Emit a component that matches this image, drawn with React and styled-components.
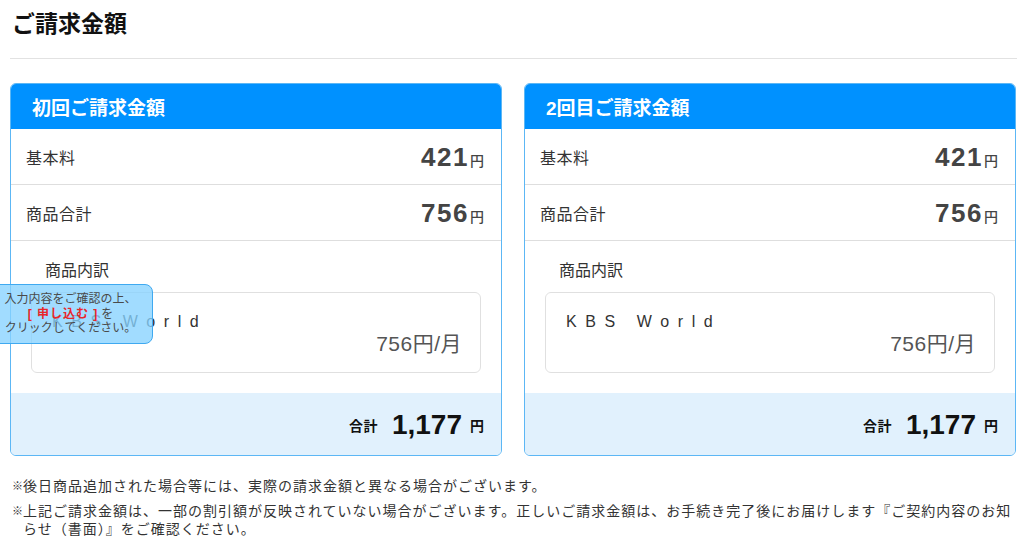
import React from "react";
import styled, { createGlobalStyle } from "styled-components";

const Global = createGlobalStyle`
  html, body { margin: 0; padding: 0; background: #fff; }
  body { font-family: "Liberation Sans", "Noto Sans CJK JP", sans-serif; color: #333; }
  * { box-sizing: border-box; }
`;

const Page = styled.div`
  position: relative;
  padding: 0 7px 0 10px;
  width: 1024px;
  height: 559px;
  overflow: hidden;
`;

const Title = styled.h1`
  margin: 0;
  padding: 10px 2px 20px;
  font-size: 23px;
  line-height: 28px;
  font-weight: 700;
  color: #111;
  border-bottom: 1px solid #e2e2e2;
`;

const Cards = styled.div`
  display: grid;
  grid-template-columns: 492px 492px;
  gap: 22px;
  margin-top: 24px;
`;

const Card = styled.section`
  border: 1px solid #5cb7f5;
  border-radius: 6px;
  overflow: hidden;
  background: #fff;
`;

const CardHeader = styled.div`
  height: 45px;
  background: #0091ff;
  color: #fff;
  font-size: 19px;
  font-weight: 700;
  display: flex;
  align-items: center;
  padding: 0 0 0 21px;
`;

const Row = styled.div`
  display: flex;
  align-items: center;
  justify-content: space-between;
  height: 56px;
  padding: 1px 17px 0 15px;
  border-bottom: 1px solid #dedede;
`;

const Label = styled.span`
  font-size: 16px;
  letter-spacing: 0.5px;
  color: #333;
`;

const Amount = styled.span`
  display: flex;
  align-items: baseline;
  color: #444;
`;

const Num = styled.span`
  font-size: 26px;
  font-weight: 700;
  letter-spacing: 1.5px;
`;

const Yen = styled.span`
  font-size: 14px;
  margin-left: 1px;
  font-weight: 500;
`;

const Breakdown = styled.div`
  padding: 18px 20px 20px;
`;

const SubLabel = styled.div`
  font-size: 16px;
  line-height: 24px;
  padding-left: 14px;
  color: #333;
  margin-bottom: 9px;
`;

const ItemBox = styled.div`
  border: 1px solid #e0e0e0;
  border-radius: 6px;
  padding: 18px 18px 17px 20px;
`;

const ItemName = styled.div`
  font-family: "Liberation Sans", sans-serif;
  font-size: 16px;
  line-height: 22px;
  letter-spacing: 8.6px;
  color: #333;
`;

const ItemPrice = styled.div`
  font-size: 21px;
  line-height: 22px;
  letter-spacing: 0.5px;
  text-align: right;
  color: #555;
`;

const Footer = styled.div`
  height: 62px;
  background: #e1f1fd;
  display: flex;
  align-items: center;
  justify-content: flex-end;
  padding: 1px 17px 0 0;
  color: #111;
  font-weight: 700;
`;

const TotalLabel = styled.span`
  font-size: 14px;
  letter-spacing: 0.5px;
  margin-right: 14px;
`;

const TotalNum = styled.span`
  font-size: 28px;
  margin-right: 8px;
`;

const TotalYen = styled.span`
  font-size: 14px;
`;

const Notes = styled.div`
  margin-top: 21px;
  display: flex;
  flex-direction: column;
  gap: 7px;
`;

const Note = styled.div`
  display: flex;
  font-size: 14px;
  line-height: 18px;
  letter-spacing: 1px;
  color: #333;
  padding-left: 2px;
`;

const Mark = styled.span`
  flex: 0 0 10px;
  font-size: 11px;
  letter-spacing: 0;
`;

const Tooltip = styled.div`
  position: absolute;
  left: -12px;
  top: 284px;
  width: 165px;
  height: 60px;
  border: 1px solid #3fa9f0;
  border-radius: 8px;
  background: rgba(135, 210, 255, 0.78);
  display: flex;
  flex-direction: column;
  align-items: center;
  justify-content: center;
  font-size: 12px;
  line-height: 14.5px;
  color: #4a4a4a;
`;

const Strong = styled.span`
  color: #e8262a;
  font-weight: 700;
  letter-spacing: 1px;
  margin-right: 3px;
`;

const cards = [
  { title: "初回ご請求金額" },
  { title: "2回目ご請求金額" },
];

export default function App() {
  return (
    <>
      <Global />
      <Page>
        <Title>ご請求金額</Title>
        <Cards>
          {cards.map((c) => (
            <Card key={c.title}>
              <CardHeader>{c.title}</CardHeader>
              <Row>
                <Label>基本料</Label>
                <Amount>
                  <Num>421</Num>
                  <Yen>円</Yen>
                </Amount>
              </Row>
              <Row>
                <Label>商品合計</Label>
                <Amount>
                  <Num>756</Num>
                  <Yen>円</Yen>
                </Amount>
              </Row>
              <Breakdown>
                <SubLabel>商品内訳</SubLabel>
                <ItemBox>
                  <ItemName>KBS World</ItemName>
                  <ItemPrice>756円/月</ItemPrice>
                </ItemBox>
              </Breakdown>
              <Footer>
                <TotalLabel>合計</TotalLabel>
                <TotalNum>1,177</TotalNum>
                <TotalYen>円</TotalYen>
              </Footer>
            </Card>
          ))}
        </Cards>
        <Notes>
          <Note>
            <Mark>※</Mark>
            <span>後日商品追加された場合等には、実際の請求金額と異なる場合がございます。</span>
          </Note>
          <Note>
            <Mark>※</Mark>
            <span>
              上記ご請求金額は、一部の割引額が反映されていない場合がございます。正しいご請求金額は、お手続き完了後にお届けします『ご契約内容のお知らせ（書面）』をご確認ください。
            </span>
          </Note>
        </Notes>
        <Tooltip>
          <div>入力内容をご確認の上、</div>
          <div>
            <Strong>[ 申し込む ]</Strong>を
          </div>
          <div>クリックしてください。</div>
        </Tooltip>
      </Page>
    </>
  );
}
